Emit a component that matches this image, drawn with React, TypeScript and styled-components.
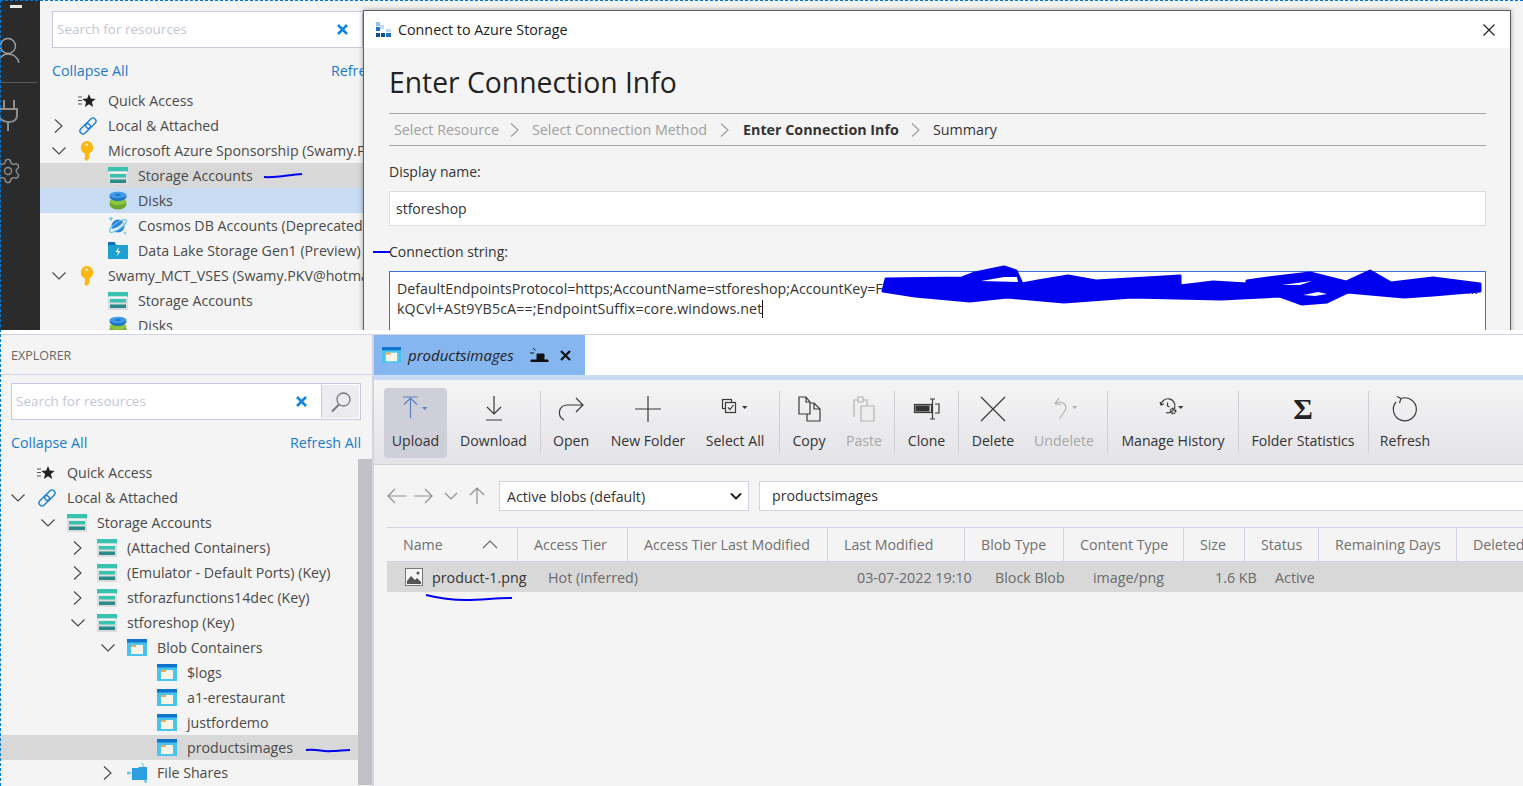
import React from 'react';
import styled, { createGlobalStyle } from 'styled-components';
import { Settings } from 'lucide-react';

const GlobalStyle = createGlobalStyle`
  html, body {
    margin: 0;
    padding: 0;
    background: #fff;
    font-family: "Open Sans", "Noto Sans", sans-serif;
    font-size: 14px;
  }
  * { box-sizing: border-box; }
`;

const Page = styled.div`
  position: relative;
  width: 1523px;
  height: 786px;
  overflow: hidden;
  display: flex;
  flex-direction: column;
  background: #fff;
`;

const SelectionEdge = styled.div`
  position: absolute;
  inset: 0;
  border-top: 1px dashed #0078d7;
  border-left: 1px dashed #0078d7;
  pointer-events: none;
`;

const ScribbleLayer = styled.svg`
  position: absolute;
  left: 0;
  top: 0;
  pointer-events: none;
`;

/* upper half: storage explorer with the connect dialog */
const TopShot = styled.section`
  flex: none;
  height: 330px;
  display: flex;
  overflow: hidden;
  background: #f4f4f4;
`;

const ActivityBar = styled.nav`
  flex: none;
  width: 40px;
  height: 100%;
  background: #2b2b2b;
  display: flex;
  flex-direction: column;
  align-items: flex-start;
  padding-top: 5px;
  overflow: hidden;
  svg { display: block; flex: none; }
`;

const MinusMark = styled.div`
  width: 12px;
  height: 3px;
  margin-left: 10px;
  background: #e8e8e8;
`;

const UserMark = styled.svg`
  margin-top: 28px;
  overflow: visible;
`;

const ActivityRule = styled.div`
  width: 36px;
  height: 1px;
  margin: 18px 0 17px 1px;
  background: #5a5a5a;
`;

const GearMark = styled(Settings)`
  margin: 25px 0 0 -6px;
`;

const TopPanel = styled.div`
  flex: none;
  width: 323px;
  height: 100%;
  overflow: hidden;
  padding-top: 11px;
`;

const ExplorerInner = styled.div<{ $width: number }>`
  width: ${(p) => p.$width}px;
`;

const SearchWrap = styled.div<{ $left: number }>`
  height: 37px;
  width: 350px;
  margin-left: ${(p) => p.$left}px;
  display: flex;
  align-items: stretch;
  background: #fff;
  border: 1px solid #c9c9dd;
`;

const SearchText = styled.div`
  flex: 1;
  padding-left: 4px;
  line-height: 35px;
  font-size: 13.5px;
  color: #c3c6d4;
`;

const ClearSlot = styled.div`
  width: 36px;
  display: flex;
  align-items: center;
  justify-content: flex-start;
  padding-left: 12px;
`;

const SearchButton = styled.div`
  width: 38px;
  margin: 1px;
  background: #ececf0;
  border-left: 1px solid #c9c9dd;
  display: flex;
  align-items: center;
  justify-content: center;
`;

const LinkRow = styled.div<{ $left: number }>`
  width: 350px;
  height: 22px;
  margin: 12px 0 6px ${(p) => p.$left}px;
  display: flex;
  justify-content: space-between;
  line-height: 22px;
  font-size: 14.3px;
  color: #1b7bc9;
`;

const TreeWrap = styled.div`
  display: flex;
  align-items: stretch;
`;

const Tree = styled.div`
  flex: 1;
  min-width: 0;
`;

const TreeScroll = styled.div`
  flex: none;
  width: 14px;
  margin-top: -1px;
  background: #c1c1c7;
`;

const Row = styled.div<{ $pad: number; $tone?: 'grey' | 'blue' }>`
  height: 25px;
  display: flex;
  align-items: center;
  padding-left: ${(p) => p.$pad}px;
  white-space: nowrap;
  overflow: hidden;
  font-size: 14.2px;
  color: #4a4a4a;
  background: ${(p) => (p.$tone === 'grey' ? '#d8d8d8' : p.$tone === 'blue' ? '#c7dbf3' : 'transparent')};
`;

const ChevronSlot = styled.div`
  flex: none;
  width: 27px;
  display: flex;
  align-items: center;
`;

const IconSlot = styled.div`
  flex: none;
  width: 30px;
  display: flex;
  align-items: center;
`;

const Dialog = styled.div`
  flex: none;
  width: 1148px;
  height: 330px;
  margin-top: 10px;
  background: #f4f4f4;
  border: 1px solid #5f5f5f;
  border-bottom: 0;
  box-shadow: 0 0 5px rgba(0, 0, 0, 0.35);
  overflow: hidden;
`;

const DialogTitle = styled.header`
  height: 37px;
  background: #fff;
  display: flex;
  align-items: center;
  padding: 0 14px 0 11px;
  color: #222;
  font-size: 14.3px;
  svg { flex: none; }
`;

const DialogTitleText = styled.span`
  flex: 1;
  margin-left: 6px;
`;

const DialogBody = styled.div`
  padding: 0 24px 0 25px;
`;

const Heading = styled.h1`
  margin: 0;
  height: 65px;
  line-height: 68px;
  font-size: 28.3px;
  font-weight: 400;
  color: #222;
`;

const Steps = styled.div`
  height: 33px;
  display: flex;
  align-items: center;
  padding-left: 5px;
  border-top: 1px solid #a6a6a6;
  border-bottom: 1px solid #a6a6a6;
  font-size: 14.3px;
`;

const Step = styled.span<{ $state?: 'done' | 'current' }>`
  color: ${(p) => (p.$state === 'done' ? '#a0a0a0' : '#333')};
  font-weight: ${(p) => (p.$state === 'current' ? 700 : 400)};
`;

const StepGap = styled.span<{ $w: number }>`
  width: ${(p) => p.$w}px;
  display: flex;
  justify-content: center;
`;

const FieldLabel = styled.div<{ $top: number }>`
  height: 22px;
  line-height: 22px;
  margin-top: ${(p) => p.$top}px;
  font-size: 14px;
  color: #333;
`;

const TextInput = styled.div`
  height: 35px;
  margin-top: 8px;
  padding-left: 6px;
  background: #fff;
  border: 1px solid #dcdce4;
  line-height: 33px;
  font-size: 14px;
  color: #333;
`;

const ConnectionArea = styled.div`
  height: 80px;
  margin-top: 8px;
  padding: 7px 7px;
  background: #fff;
  border: 1px solid #3c6edc;
  line-height: 20px;
  font-size: 14.2px;
  color: #333;
  white-space: nowrap;
`;

const ConnectionLine = styled.div<{ $spacing?: number }>`
  height: 20px;
  letter-spacing: ${(p) => p.$spacing ?? 0}px;
`;

const Caret = styled.span`
  display: inline-block;
  width: 1px;
  height: 18px;
  background: #111;
  vertical-align: -4px;
`;

const KeyEnd = styled.span`
  float: right;
`;

/* white gap between the two pasted screenshots */
const PasteGap = styled.div`
  flex: none;
  height: 5px;
  border-bottom: 1px solid #d2d2e2;
`;

/* lower half */
const BottomShot = styled.section`
  flex: 1;
  min-height: 0;
  display: flex;
  background: #f4f4f4;
`;

const BottomPanel = styled.aside`
  flex: none;
  width: 374px;
  border-right: 2px solid #d4d4e0;
  overflow: hidden;
`;

const PanelHeader = styled.div`
  height: 40px;
  line-height: 42px;
  padding-left: 11px;
  margin-bottom: 8px;
  border-bottom: 1px solid #d2d2e2;
  font-size: 12.5px;
  color: #666;
`;

const Main = styled.main`
  flex: 1;
  min-width: 0;
  display: flex;
  flex-direction: column;
`;

const TabStrip = styled.div`
  flex: none;
  height: 40px;
  display: flex;
  background: #fff;
`;

const Tab = styled.div`
  width: 211px;
  display: flex;
  align-items: center;
  padding-left: 8px;
  background: #86b6ef;
`;

const TabName = styled.span`
  margin-left: 7px;
  font-style: italic;
  font-size: 15px;
  color: #222;
`;

const TabPin = styled.span`
  display: flex;
  margin-left: 16px;
`;

const TabClose = styled.span`
  display: flex;
  margin-left: 11px;
`;

const Accent = styled.div`
  flex: none;
  height: 5px;
  background: #c8dcf5;
`;

const Toolbar = styled.div`
  flex: none;
  height: 85px;
  display: flex;
  align-items: flex-start;
  padding: 8px 0 0 10px;
  border-bottom: 1px solid #d2d2dc;
  background: linear-gradient(#f5f5f5, #e3e3e8);
`;

const ToolButton = styled.div<{ $w: number; $active?: boolean; $off?: boolean }>`
  flex: none;
  width: ${(p) => p.$w}px;
  height: 70px;
  display: flex;
  flex-direction: column;
  align-items: center;
  white-space: nowrap;
  border-radius: 4px;
  background: ${(p) => (p.$active ? '#cfcfd9' : 'transparent')};
  color: ${(p) => (p.$off ? '#a8a8a8' : '#333')};
`;

const ToolIcon = styled.div`
  height: 42px;
  display: flex;
  align-items: center;
  justify-content: center;
`;

const ToolLabel = styled.div`
  line-height: 22px;
  font-size: 14.1px;
`;

const SigmaGlyph = styled.span`
  font-family: "Liberation Serif", serif;
  font-weight: 700;
  font-size: 30px;
  line-height: 30px;
  color: #222;
`;

const ToolSep = styled.div<{ $gap?: number }>`
  flex: none;
  width: 1px;
  height: 62px;
  margin: 3px 0 0 ${(p) => p.$gap ?? 0}px;
  background: #cfcfd8;
`;

const AddressRow = styled.div`
  flex: none;
  height: 46px;
  display: flex;
  padding: 16px 0 0 13px;
`;

const NavIcons = styled.div`
  flex: none;
  width: 112px;
  height: 30px;
  display: flex;
  align-items: center;
`;

const FilterBox = styled.div`
  flex: none;
  width: 250px;
  height: 30px;
  padding: 0 6px 0 7px;
  display: flex;
  align-items: center;
  justify-content: space-between;
  background: #fff;
  border: 1px solid #d4d4e0;
  font-size: 14.2px;
  color: #333;
`;

const PathBox = styled.div`
  flex: 1;
  height: 30px;
  margin-left: 10px;
  padding-left: 12px;
  background: #fff;
  border: 1px solid #d4d4e0;
  border-right: 0;
  line-height: 28px;
  font-size: 14.2px;
  color: #333;
`;

const Table = styled.div`
  margin: 16px 0 0 13px;
`;

const HeaderRow = styled.div`
  height: 35px;
  display: grid;
  grid-template-columns: 131px 110px 200px 137px 99px 120px 61px 74px 138px 80px;
  border-top: 1px solid #d2d2e2;
  border-bottom: 1px solid #d2d2e2;
  white-space: nowrap;
  overflow: hidden;
`;

const HeaderCell = styled.div`
  display: flex;
  align-items: center;
  justify-content: space-between;
  padding: 0 19px 0 16px;
  border-right: 1px solid #d2d2e2;
  font-size: 14.2px;
  color: #707070;
  &:last-child { border-right: 0; }
`;

const DataRow = styled.div`
  height: 30px;
  display: grid;
  grid-template-columns: 161px 309px 138px 98px 122px 60px 1fr;
  align-items: center;
  background: #d8d8d8;
  font-size: 14.3px;
  color: #6a6a6a;
  white-space: nowrap;
`;

const NameCell = styled.div`
  display: flex;
  align-items: center;
  padding-left: 18px;
  color: #333;
`;

const FileName = styled.span`
  margin-left: 9px;
`;

/* ---- little drawings ---- */

const Chevron = ({ open, ink = '#444' }: { open?: boolean; ink?: string }) =>
  open ? (
    <svg width="16" height="12" viewBox="0 0 16 12" fill="none" stroke={ink} strokeWidth="1.1">
      <path d="M1.5 2.5 8 9l6.5-6.5" />
    </svg>
  ) : (
    <svg width="16" height="16" viewBox="0 0 16 16" fill="none" stroke={ink} strokeWidth="1.1">
      <path d="M4 1.5 11 8l-7 6.5" />
    </svg>
  );

const StorageIcon = () => (
  <svg width="20" height="18" viewBox="0 0 20 18">
    <rect y="0" width="20" height="18" fill="#dcdcdc" />
    <rect y="0" width="20" height="4.5" fill="#38c2b0" />
    <rect x="1" y="4.5" width="18" height="2" fill="#f4f4f4" />
    <rect x="2" y="7" width="16" height="3.5" fill="#38c2b0" />
    <rect x="2" y="12.5" width="16" height="3.5" fill="#2b8b8b" />
  </svg>
);

const DiskIcon = () => (
  <svg width="20" height="19" viewBox="0 0 20 19">
    <ellipse cx="10" cy="13" rx="8.5" ry="5.5" fill="#6aa92f" />
    <ellipse cx="10" cy="10.5" rx="8.5" ry="3.5" fill="#8cc63f" />
    <ellipse cx="10" cy="5.5" rx="8.5" ry="4.5" fill="#1f73c4" />
    <ellipse cx="10" cy="4" rx="8.5" ry="3.2" fill="#3f9be8" />
    <ellipse cx="10" cy="4" rx="3" ry="1" fill="#1f73c4" />
  </svg>
);

const BlobIcon = ({ size = 20 }: { size?: number }) => (
  <svg width={size} height={size * 0.85} viewBox="0 0 20 17">
    <rect width="20" height="17" fill="#49c4ee" />
    <rect width="20" height="3.5" fill="#0f74cc" />
    <rect x="4" y="6" width="12" height="9" fill="#f8f4e6" />
    <rect x="4" y="6" width="5" height="2" fill="#f0a94e" />
  </svg>
);

const KeyIcon = () => (
  <svg width="16" height="20" viewBox="-2 0 16 20">
    <path d="M6.500 0a6.500 6.500 0 0 1 3 12.300V17l-3 3-2-2v-1.500l1-1-1-1 1-1-1-1.200V12.300A6.500 6.500 0 0 1 6.500 0Z" fill="#fcb714" />
    <circle cx="6.500" cy="3.600" r="1.500" fill="#fff1c2" />
  </svg>
);

const LinkIcon = () => (
  <svg width="20" height="20" viewBox="0 0 20 20" fill="none" stroke="#1c7ed0" strokeWidth="1.4">
    <g transform="rotate(-45 10 10)">
      <rect x="0" y="7" width="12" height="6" rx="3" />
      <rect x="8" y="7" width="12" height="6" rx="3" />
    </g>
  </svg>
);

const QuickIcon = () => (
  <svg width="18" height="14" viewBox="0 0 18 14">
    <path d="M0 3h4M0 6.500h4M0 10h4" stroke="#555" strokeWidth="1.2" />
    <path d="m11 0 1.800 4.600 4.900.3-3.800 3.200 1.200 4.900L11 10.300l-4.100 2.700 1.200-4.900-3.800-3.200 4.900-.3Z" fill="#222" />
  </svg>
);

const CosmosIcon = () => (
  <svg width="20" height="20" viewBox="0 0 20 20">
    <circle cx="10" cy="10" r="6.500" fill="#2f7fd8" />
    <path d="M4 13c4-1 8-3 11-7l1 3c-3 4-7 6-11 6Z" fill="#d8ecfb" />
    <ellipse cx="10" cy="10" rx="10" ry="3.400" transform="rotate(-35 10 10)" fill="none" stroke="#54c3ee" strokeWidth="1.1" />
    <path d="M3 0l.7 2 2 .7-2 .7L3 5.400l-.7-2-2-.7 2-.7ZM17 15l.5 1.500 1.500.5-1.500.5L17 19l-.5-1.500L15 17l1.500-.5Z" fill="#54c3ee" />
  </svg>
);

const LakeIcon = () => (
  <svg width="20" height="17" viewBox="0 0 20 17">
    <path d="M0 1.500h7.500L9 3h11v14H0Z" fill="#1d9fd2" />
    <rect width="7" height="3" fill="#0f6fb5" />
    <path d="M11 5 7.500 10h2.500L9 14l3.500-5H10Z" fill="#fff" />
  </svg>
);

const ShareIcon = () => (
  <svg width="22" height="20" viewBox="0 0 22 20">
    <path d="M5 5h6l1-1h8v13H5Z" fill="#2c9fe3" />
    <path d="M0 10h5M15 0l2 4M18 17l1 3" stroke="#54c3ee" strokeWidth="1" />
    <circle cx="1.500" cy="10" r="1.500" fill="#54c3ee" />
    <circle cx="18.500" cy="18.500" r="1.200" fill="#54c3ee" />
  </svg>
);

const ClearIcon = () => (
  <svg width="11" height="11" viewBox="0 0 11 11" stroke="#0f84e0" strokeWidth="2.6">
    <path d="M1 1l9 9M10 1l-9 9" />
  </svg>
);

const CaretDown = ({ x, y, fill }: { x: number; y: number; fill: string }) => (
  <path d={`M${x} ${y}h5.500l-2.750 3Z`} fill={fill} stroke="none" />
);

const ToolGlyph = ({ name }: { name: string }) => {
  const ink = '#3a3a3a';
  const off = '#b4b4b4';
  const box = { width: 30, height: 30, viewBox: '0 0 30 30', fill: 'none', strokeWidth: 1.2 };
  switch (name) {
    case 'upload':
      return (
        <svg {...box} stroke="#5b80c2">
          <path d="M2 3h15M9.500 24V4M3 10.500 9.500 4l6.500 6.500" />
          <CaretDown x={21} y={13} fill="#5b80c2" />
        </svg>
      );
    case 'download':
      return (
        <svg {...box} stroke={ink}>
          <path d="M15 2v18M8 13l7 7 7-7M7 26h16" />
        </svg>
      );
    case 'open':
      return (
        <svg {...box} stroke={ink}>
          <path d="M8 26C1 22 2 12 11 11h16M20 4l7 7-7 7" />
        </svg>
      );
    case 'plus':
      return (
        <svg {...box} stroke={ink}>
          <path d="M2 15h26M15 2v26" />
        </svg>
      );
    case 'selectall':
      return (
        <svg {...box} stroke={ink}>
          <rect x="2.500" y="5.500" width="9" height="9" />
          <rect x="5.500" y="8.500" width="10" height="10" fill="#f0f0f2" />
          <path d="m8 13.500 2 2 3.500-4.500" />
          <CaretDown x={22} y={12} fill={ink} />
        </svg>
      );
    case 'copy':
      return (
        <svg {...box} stroke={ink}>
          <path d="M5 20V3h7l4 5v12ZM12 3v5h4M16 9h4l6 6v12H13v-7M20 9v6h6" />
        </svg>
      );
    case 'paste':
      return (
        <svg {...box} stroke={off}>
          <path d="M5 23V6h4V3h5v3h4v5M9 6v2h5V6M12 12h13v15H12Z" />
        </svg>
      );
    case 'clone':
      return (
        <svg {...box} stroke={ink}>
          <rect x="2.500" y="10.500" width="17" height="8" />
          <rect x="4" y="12" width="13" height="5" fill="#333" />
          <path d="M18 5h5M18 25h5M20.500 5v20M23 10h4v9h-4" />
        </svg>
      );
    case 'delete':
      return (
        <svg {...box} stroke={ink}>
          <path d="m3 3 24 24M27 3 3 27" />
        </svg>
      );
    case 'undelete':
      return (
        <svg {...box} stroke={off}>
          <path d="M10 4 6 9.500l6 1.500M6.500 9.500c7-4 13 2 9 8l-5 7" />
          <CaretDown x={23} y={12} fill={off} />
        </svg>
      );
    case 'history':
      return (
        <svg {...box} stroke={ink}>
          <path d="M3 11a7 7 0 1 1 5 7.500M2 8l1 3 3-1M9.500 8.500v3.500l2 1" />
          <circle cx="15" cy="17" r="2.500" strokeWidth="1.8" strokeDasharray="1.400 .6" />
          <CaretDown x={20} y={12} fill={ink} />
        </svg>
      );
    default:
      return (
        <svg {...box} stroke={ink}>
          <path d="M11 4.500a11.500 11.500 0 1 1-5 3.500M7 2.500l4 2-1.500 4.500" />
        </svg>
      );
  }
};

/* ---- data ---- */

type TreeItem = {
  label: string;
  level: number;
  icon?: React.ReactNode;
  chevron?: 'open' | 'closed';
  tone?: 'grey' | 'blue';
};

const topRows: TreeItem[] = [
  { label: 'Quick Access', level: 0, icon: <QuickIcon /> },
  { label: 'Local & Attached', level: 0, icon: <LinkIcon />, chevron: 'closed' },
  { label: 'Microsoft Azure Sponsorship (Swamy.PKV@hotmail.com)', level: 0, icon: <KeyIcon />, chevron: 'open' },
  { label: 'Storage Accounts', level: 1, icon: <StorageIcon />, tone: 'grey' },
  { label: 'Disks', level: 1, icon: <DiskIcon />, tone: 'blue' },
  { label: 'Cosmos DB Accounts (Deprecated)', level: 1, icon: <CosmosIcon /> },
  { label: 'Data Lake Storage Gen1 (Preview)', level: 1, icon: <LakeIcon /> },
  { label: 'Swamy_MCT_VSES (Swamy.PKV@hotmail.com)', level: 0, icon: <KeyIcon />, chevron: 'open' },
  { label: 'Storage Accounts', level: 1, icon: <StorageIcon /> },
  { label: 'Disks', level: 1, icon: <DiskIcon /> },
];

const bottomRows: TreeItem[] = [
  { label: 'Quick Access', level: 0, icon: <QuickIcon /> },
  { label: 'Local & Attached', level: 0, icon: <LinkIcon />, chevron: 'open' },
  { label: 'Storage Accounts', level: 1, icon: <StorageIcon />, chevron: 'open' },
  { label: '(Attached Containers)', level: 2, icon: <StorageIcon />, chevron: 'closed' },
  { label: '(Emulator - Default Ports) (Key)', level: 2, icon: <StorageIcon />, chevron: 'closed' },
  { label: 'stforazfunctions14dec (Key)', level: 2, icon: <StorageIcon />, chevron: 'closed' },
  { label: 'stforeshop (Key)', level: 2, icon: <StorageIcon />, chevron: 'open' },
  { label: 'Blob Containers', level: 3, icon: <BlobIcon />, chevron: 'open' },
  { label: '$logs', level: 4, icon: <BlobIcon /> },
  { label: 'a1-erestaurant', level: 4, icon: <BlobIcon /> },
  { label: 'justfordemo', level: 4, icon: <BlobIcon /> },
  { label: 'productsimages', level: 4, icon: <BlobIcon />, tone: 'grey' },
  { label: 'File Shares', level: 3, icon: <ShareIcon />, chevron: 'closed' },
];

const tools = [
  { label: 'Upload', icon: 'upload', w: 63, active: true },
  { label: 'Download', icon: 'download', w: 93, sep: 0 },
  { label: 'Open', icon: 'open', w: 60 },
  { label: 'New Folder', icon: 'plus', w: 94 },
  { label: 'Select All', icon: 'selectall', w: 80, sep: 4 },
  { label: 'Copy', icon: 'copy', w: 58 },
  { label: 'Paste', icon: 'paste', w: 52, off: true, sep: 4 },
  { label: 'Clone', icon: 'clone', w: 63, sep: 0 },
  { label: 'Delete', icon: 'delete', w: 68 },
  { label: 'Undelete', icon: 'undelete', w: 74, off: true, sep: 6 },
  { label: 'Manage History', icon: 'history', w: 130, sep: 0 },
  { label: 'Folder Statistics', icon: 'sigma', w: 128, sep: 1 },
  { label: 'Refresh', icon: 'refresh', w: 72 },
];

const headers = [
  'Name',
  'Access Tier',
  'Access Tier Last Modified',
  'Last Modified',
  'Blob Type',
  'Content Type',
  'Size',
  'Status',
  'Remaining Days',
  'Deleted',
];

/* ---- pieces ---- */

const Explorer = ({
  rows,
  left,
  base,
  width,
  scroll,
}: {
  rows: TreeItem[];
  left: number;
  base: number;
  width: number;
  scroll?: boolean;
}) => (
  <ExplorerInner $width={width}>
    <SearchWrap $left={left}>
      <SearchText>Search for resources</SearchText>
      <ClearSlot>
        <ClearIcon />
      </ClearSlot>
      <SearchButton>
        <svg width="24" height="24" viewBox="0 0 24 24" fill="none" stroke="#777" strokeWidth="1.3">
          <circle cx="14.500" cy="9.500" r="6.500" />
          <path d="M10 14.500 3 21.500" strokeWidth="2" />
        </svg>
      </SearchButton>
    </SearchWrap>
    <LinkRow $left={left}>
      <span>Collapse All</span>
      <span>Refresh All</span>
    </LinkRow>
    <TreeWrap>
      <Tree>
        {rows.map((row, i) => (
          <Row key={i} $pad={base + row.level * 30} $tone={row.tone}>
            <ChevronSlot>
              {row.chevron && <Chevron open={row.chevron === 'open'} />}
            </ChevronSlot>
            <IconSlot>{row.icon}</IconSlot>
            {row.label}
          </Row>
        ))}
      </Tree>
      {scroll && <TreeScroll />}
    </TreeWrap>
  </ExplorerInner>
);

const Scribbles = () => (
  <ScribbleLayer width="1523" height="786" viewBox="0 0 1523 786" fill="none" stroke="#0000ee">
    <path d="M264 177c12 1 24-2 38-3" strokeWidth="2" />
    <path d="M373 252h17" strokeWidth="2" />
    <path d="M306 750c15-1 14 2 26 1 6 0 12-1 18-1" strokeWidth="2" />
    <path d="M426 595c12 3 24 5 40 5 16 0 30-2 46-2" strokeWidth="2" />
    <path
      fill="#0000ee"
      strokeWidth="3"
      strokeLinejoin="round"
      d="M886 279 962 278 975 273 1004 267 1016 271 1022 284 1038 281 1068 276 1096 281 1180 276V286L1213 282 1247 284V281L1268 278 1310 273 1346 282 1370 271 1391 283 1433 278 1480 284V291L1433 295 1404 297 1348 292 1327 302 1302 304 1280 296 1221 299 1132 297 1064 302 1007 297 970 301 915 296 883 291Z"
    />
    <path stroke="none" fill="#fff" d="M981 281 1004 277 1017 277 1018 282Z" />
    <path stroke="none" fill="#fff" d="M1282 285 1312 281 1300 285Z" />
    <path stroke="none" fill="#f8f8ff" d="M1303 295 1318 292 1327 294 1315 296Z" />
  </ScribbleLayer>
);

const App = () => (
  <Page>
    <GlobalStyle />
    <TopShot>
      <ActivityBar>
        <MinusMark />
        <UserMark width="24" height="28" viewBox="0 0 24 28" fill="none" stroke="#a0a0a0" strokeWidth="1.4">
          <circle cx="8" cy="10" r="7.500" />
          <path d="M-2 26c2-5 5-8 10-8s10 3 11 9" />
        </UserMark>
        <ActivityRule />
        <svg width="20" height="32" viewBox="0 0 20 32" fill="none" stroke="#8f8f8f" strokeWidth="2">
          <path d="M4 0v9M14 0v9M-1 9h18v6c0 5-4 7-8 7s-10-2-10-7M8 22v9" />
        </svg>
        <GearMark size={28} color="#8f8f8f" strokeWidth={1.2} />
      </ActivityBar>
      <TopPanel>
        <Explorer rows={topRows} left={12} base={11} width={400} />
      </TopPanel>
      <Dialog>
        <DialogTitle>
          <svg width="17" height="16" viewBox="0 0 17 16">
            <rect x="1" y="0" width="4" height="4" fill="#8ec4ee" />
            <rect x="1" y="5" width="4" height="4" fill="#1f73c4" />
            <rect x="5" y="3" width="4" height="4" fill="#bcdcf5" />
            <rect x="1" y="11" width="4" height="4" fill="#0f4d96" />
            <rect x="6" y="11" width="4" height="4" fill="#0f4d96" />
            <rect x="11" y="11" width="5" height="4" fill="#1f73c4" />
            <rect x="11" y="7" width="5" height="3" fill="#bcdcf5" />
          </svg>
          <DialogTitleText>Connect to Azure Storage</DialogTitleText>
          <svg width="14" height="14" viewBox="0 0 14 14" stroke="#222" strokeWidth="1.2">
            <path d="m1.500 1.500 11 11M12.500 1.500l-11 11" />
          </svg>
        </DialogTitle>
        <DialogBody>
          <Heading>Enter Connection Info</Heading>
          <Steps>
            <Step $state="done">Select Resource</Step>
            <StepGap $w={33}><Chevron ink="#999" /></StepGap>
            <Step $state="done">Select Connection Method</Step>
            <StepGap $w={36}><Chevron ink="#999" /></StepGap>
            <Step $state="current">Enter Connection Info</Step>
            <StepGap $w={34}><Chevron ink="#999" /></StepGap>
            <Step>Summary</Step>
          </Steps>
          <FieldLabel $top={15}>Display name:</FieldLabel>
          <TextInput>stforeshop</TextInput>
          <FieldLabel $top={15}>Connection string:</FieldLabel>
          <ConnectionArea>
            <ConnectionLine>
              DefaultEndpointsProtocol=https;AccountName=stforeshop;AccountKey=F<KeyEnd>...</KeyEnd>
            </ConnectionLine>
            <ConnectionLine $spacing={0.14}>
              kQCvl+ASt9YB5cA==;EndpointSuffix=core.windows.net<Caret />
            </ConnectionLine>
          </ConnectionArea>
        </DialogBody>
      </Dialog>
    </TopShot>
    <PasteGap />
    <BottomShot>
      <BottomPanel>
        <PanelHeader>EXPLORER</PanelHeader>
        <Explorer rows={bottomRows} left={11} base={10} width={372} scroll />
      </BottomPanel>
      <Main>
        <TabStrip>
          <Tab>
            <BlobIcon size={19} />
            <TabName>productsimages</TabName>
            <TabPin>
              <svg width="19" height="14" viewBox="0 0 19 14">
                <path d="M0 5h4M3 0l2.500 2.500M7 12V6h7v6h4v2H1v-2Z" stroke="#111" fill="#111" strokeWidth="1" />
              </svg>
            </TabPin>
            <TabClose>
              <svg width="11" height="11" viewBox="0 0 11 11" stroke="#111" strokeWidth="2.2">
                <path d="m1 1 9 9M10 1l-9 9" />
              </svg>
            </TabClose>
          </Tab>
        </TabStrip>
        <Accent />
        <Toolbar>
          {tools.map((tool) => (
            <React.Fragment key={tool.label}>
              <ToolButton $w={tool.w} $active={tool.active} $off={tool.off}>
                <ToolIcon>
                  {tool.icon === 'sigma' ? <SigmaGlyph>Σ</SigmaGlyph> : <ToolGlyph name={tool.icon} />}
                </ToolIcon>
                <ToolLabel>{tool.label}</ToolLabel>
              </ToolButton>
              {tool.sep !== undefined && <ToolSep $gap={tool.sep} />}
            </React.Fragment>
          ))}
        </Toolbar>
        <AddressRow>
          <NavIcons>
            <svg width="104" height="20" viewBox="0 0 104 20" fill="none" stroke="#8f8f98" strokeWidth="1.2">
              <path d="M1 10h18M8 3l-7 7 7 7M27 10h18M38 3l7 7-7 7M58 7l6 6 6-6M90 18V2M83 9l7-7 7 7" />
            </svg>
          </NavIcons>
          <FilterBox>
            Active blobs (default)
            <svg width="12" height="8" viewBox="0 0 12 8" fill="none" stroke="#222" strokeWidth="2">
              <path d="m1 1.500 5 5 5-5" />
            </svg>
          </FilterBox>
          <PathBox>productsimages</PathBox>
        </AddressRow>
        <Table>
          <HeaderRow>
            {headers.map((h, i) => (
              <HeaderCell key={h}>
                {h}
                {i === 0 && (
                  <svg width="16" height="9" viewBox="0 0 16 9" fill="none" stroke="#666" strokeWidth="1.1">
                    <path d="m1 8 7-7 7 7" />
                  </svg>
                )}
              </HeaderCell>
            ))}
          </HeaderRow>
          <DataRow>
            <NameCell>
              <svg width="18" height="18" viewBox="0 0 18 18">
                <rect x=".5" y=".5" width="17" height="17" fill="#f4f4f4" stroke="#777" />
                <path d="m2 13 4-5 4 4 2-2 4 4v2H2Z" fill="#555" />
                <circle cx="13" cy="5" r="1.500" fill="#555" />
              </svg>
              <FileName>product-1.png</FileName>
            </NameCell>
            <span>Hot (inferred)</span>
            <span>03-07-2022 19:10</span>
            <span>Block Blob</span>
            <span>image/png</span>
            <span>1.6 KB</span>
            <span>Active</span>
          </DataRow>
        </Table>
      </Main>
    </BottomShot>
    <Scribbles />
    <SelectionEdge />
  </Page>
);

export default App;
